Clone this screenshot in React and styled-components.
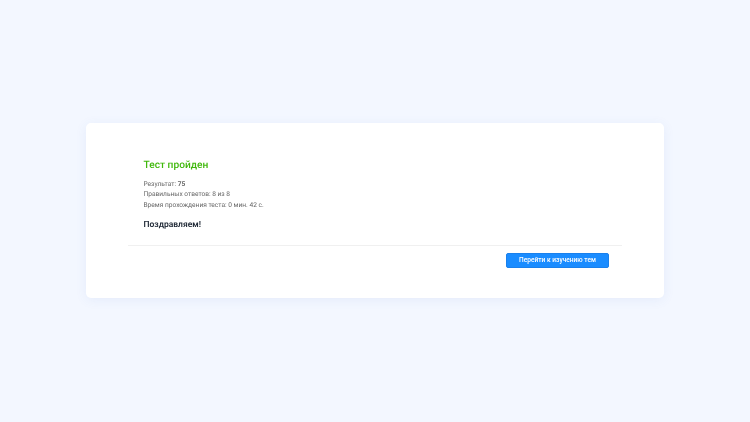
import React from 'react';
import styled, { createGlobalStyle } from 'styled-components';

const GlobalStyle = createGlobalStyle`
    html, body {
        margin: 0;
        padding: 0;
        background: #f3f7ff;
    }
`;

const App = () => {
    return (
        <Page>
            <GlobalStyle />
            <Card>
                <Body>
                    <Title>Тест пройден</Title>
                    <Line>Результат: <b>75</b></Line>
                    <Line>Правильных ответов: 8 из 8</Line>
                    <Line>Время прохождения теста: 0 мин. 42 с.</Line>
                    <Congrats>Поздравляем!</Congrats>
                </Body>
                <Footer>
                    <Button>Перейти к изучению тем</Button>
                </Footer>
            </Card>
        </Page>
    );
};

export default App;

const Page = styled.div`
    box-sizing: border-box;
    width: 750px;
    height: 422px;
    padding-bottom: 1px;
    display: flex;
    align-items: center;
    justify-content: center;
    font-family: Roboto, "Liberation Sans", sans-serif;
    text-rendering: geometricPrecision;
    overflow: hidden;
`;

const Card = styled.div`
    box-sizing: border-box;
    width: 578px;
    height: 175px;
    padding: 35px 42px 0;
    background: #fff;
    border-radius: 5px;
    box-shadow: 0 2px 12px rgba(60, 100, 200, 0.08);
    will-change: transform;
`;

const Body = styled.div`
    padding: 0 15.5px 13px;
    border-bottom: 1px solid #f0f0f0;
`;

const Title = styled.div`
    font-size: 10.2px;
    line-height: 15px;
    font-weight: 500;
    color: #40b80c;
    margin-bottom: 5.7px;
`;

const Line = styled.div`
    font-size: 6.6px;
    line-height: 10.5px;
    color: #666;

    b {
        font-weight: 700;
    }
`;

const Congrats = styled.div`
    font-size: 8.5px;
    line-height: 13px;
    font-weight: 600;
    color: #222b38;
    margin-top: 8.8px;
`;

const Footer = styled.div`
    display: flex;
    justify-content: flex-end;
    padding: 7px 13px 0 0;
`;

const Button = styled.button`
    width: 103px;
    height: 15px;
    padding: 0;
    background: #1a8cff;
    border: 1px solid #1a80ec;
    border-radius: 2px;
    color: #fff;
    font-family: inherit;
    font-size: 6.6px;
    font-weight: 500;
`;
